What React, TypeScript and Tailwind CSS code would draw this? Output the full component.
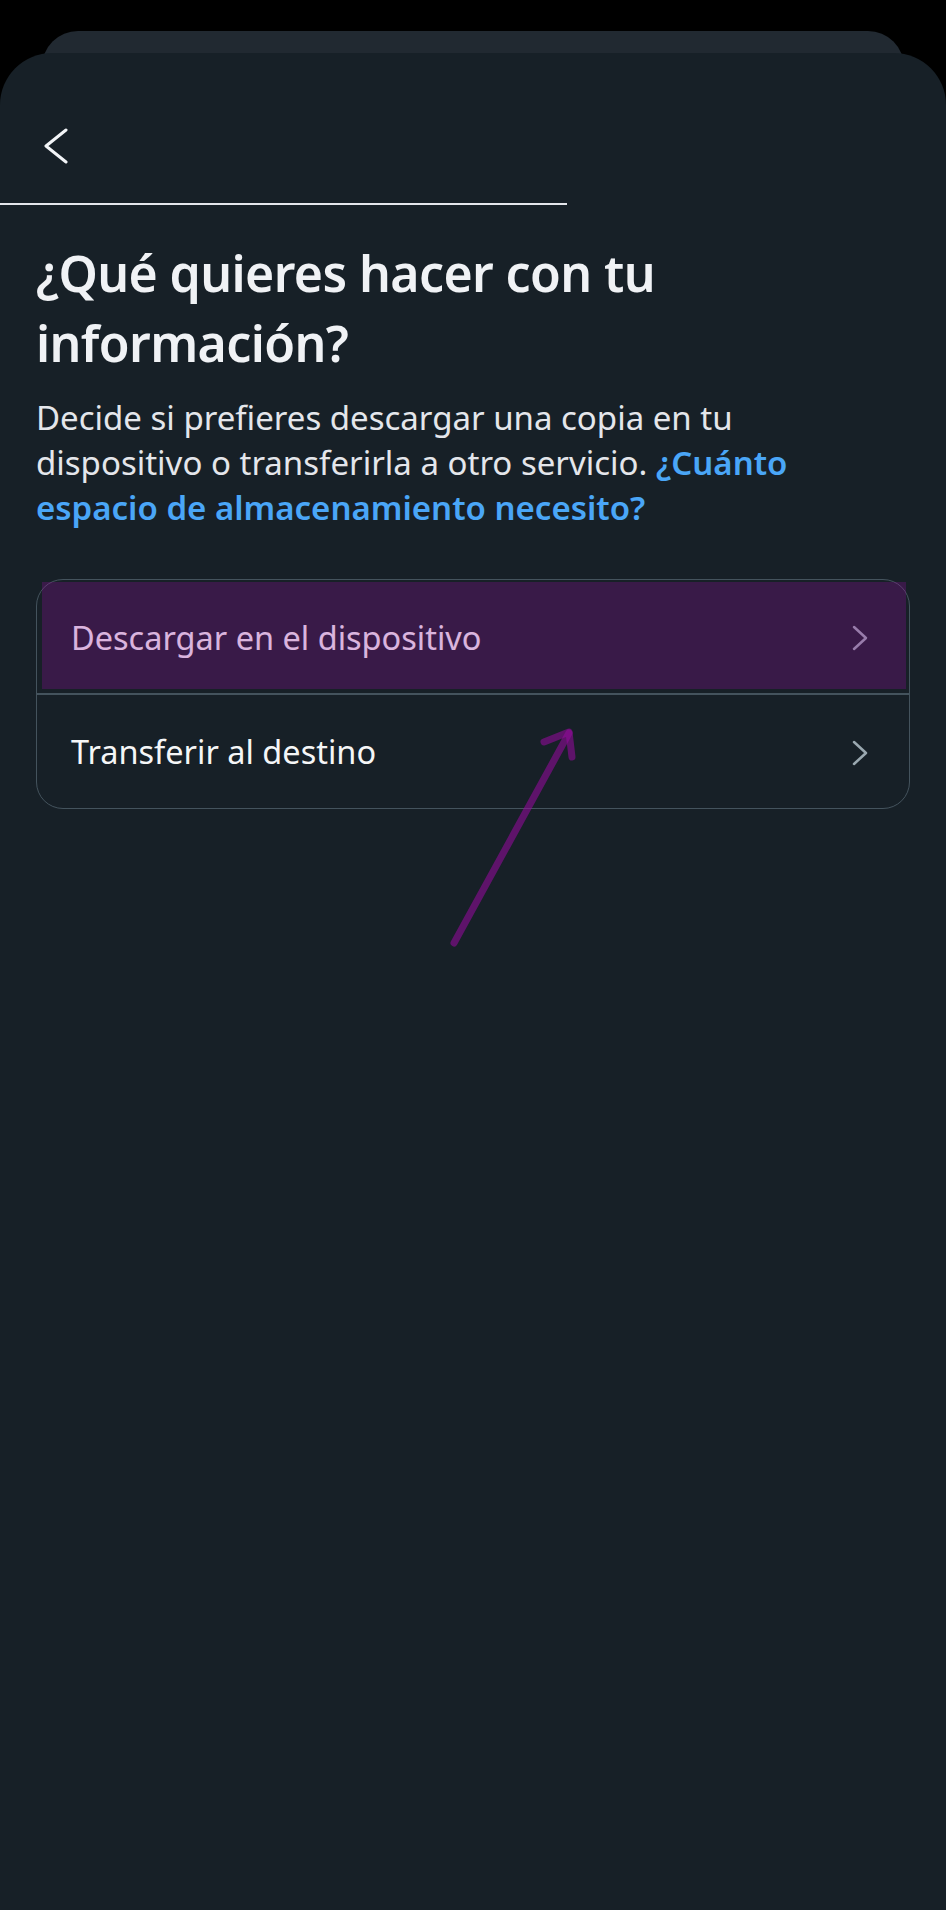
import * as React from "react";

function Chevron({ className }: { className?: string }) {
  return (
    <svg width="18" height="26" viewBox="0 0 18 26" fill="none" className={className}>
      <polyline points="3,2 15,13 3,24" stroke="currentColor" strokeWidth="2.5" strokeLinecap="round" strokeLinejoin="round" />
    </svg>
  );
}

export default function App() {
  return (
    <div
      className="relative w-[946px] h-[1910px] overflow-hidden bg-black pt-[31px]"
      style={{ fontFamily: "'Noto Sans', Roboto, sans-serif" }}
    >
      <div className="mx-[42px] h-[44px] rounded-t-[36px] bg-[#212931]" />
      <div className="relative -mt-[22px] h-[1857px] rounded-t-[52px] bg-[#172027]">
        <div className="h-[150px] pl-[43px] pt-[75px]">
          <svg width="26" height="36" viewBox="0 0 26 36" fill="none">
            <polyline points="23,2 3,18 23,34" stroke="#f2f4f7" strokeWidth="3" strokeLinecap="round" strokeLinejoin="round" />
          </svg>
        </div>
        <div className="h-[2px] w-[567px] bg-[#e4e6eb]" />
        <div className="px-[36px]">
          <h1 className="mt-[33px] text-[50px] leading-[70px] font-semibold tracking-[-0.6px] text-[#f0f2f5]">
            ¿Qué quieres hacer con tu
            <br />
            información?
          </h1>
          <p className="mt-[17px] text-[33px] leading-[45px] text-[#e4e6eb]">
            Decide si prefieres descargar una copia en tu
            <br />
            dispositivo o transferirla a otro servicio.{" "}
            <span className="font-semibold text-[#4aa6f7]">¿Cuánto</span>
            <br />
            <span className="font-semibold text-[#4aa6f7]">espacio de almacenamiento necesito?</span>
          </p>

          <div className="relative mt-[49px] rounded-[27px] border-[1.5px] border-[#44535d]">
            <div className="flex h-[113px] items-center justify-between pl-[34px] pr-[40px] pt-[3px] text-[32.5px] text-[#f5f6f7]">
              <span>Descargar en el dispositivo</span>
              <Chevron className="text-[#9aa8b0]" />
            </div>
            <div className="h-[1.5px] bg-[#44535d]" />
            <div className="flex h-[113px] items-center justify-between pl-[34px] pr-[40px] pt-[3px] text-[32.5px] text-[#f5f6f7]">
              <span>Transferir al destino</span>
              <Chevron className="text-[#9aa8b0]" />
            </div>
            <div className="absolute left-[5px] right-[3px] top-[2px] h-[107px] bg-[#930c9e]/[0.28]" />
          </div>
        </div>
      </div>

      <svg className="absolute left-0 top-0" width="946" height="1910" fill="none">
        <g stroke="#920b9b" strokeOpacity="0.58" strokeWidth="7" strokeLinecap="round" strokeLinejoin="round">
          <path d="M454 943 L569 733" />
          <path d="M544 742 L569 732 L572 757" />
        </g>
      </svg>
    </div>
  );
}
